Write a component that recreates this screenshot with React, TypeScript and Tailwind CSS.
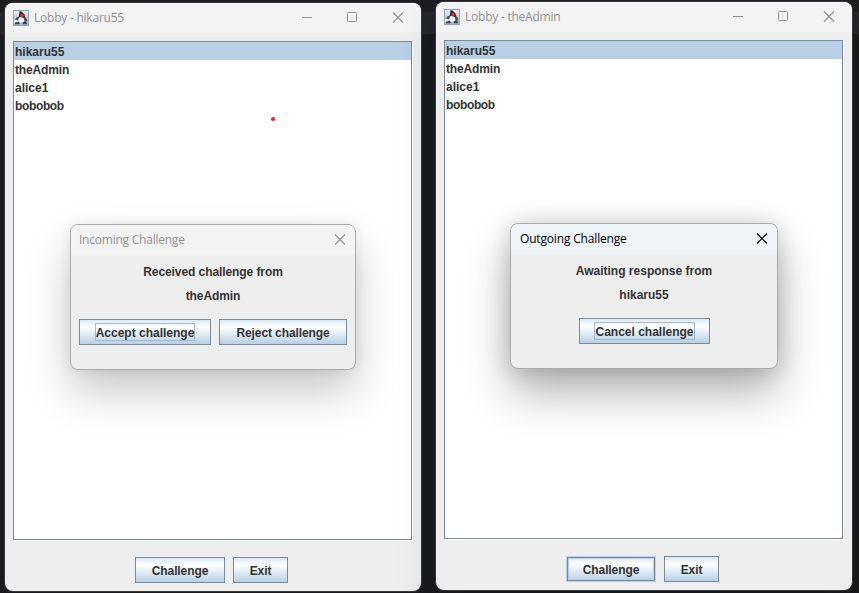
import React from "react";

const uiFont = "font-['Open_Sans','Noto_Sans',sans-serif]";
const titleText = "whitespace-nowrap text-[12px] leading-4";
const swingFont = "font-['Liberation_Sans',Arial,sans-serif] font-bold text-[12px] leading-[18px] text-[#333333]";

function DukeIcon() {
  return (
    <svg width="16" height="16" viewBox="0 0 16 16" className="shrink-0">
      <defs>
        <linearGradient id="duke-sky" x1="0" y1="0" x2="0" y2="1">
          <stop offset="0" stopColor="#e6eff6" />
          <stop offset="1" stopColor="#9fb4c9" />
        </linearGradient>
      </defs>
      <rect x="0.5" y="0.5" width="15" height="15" fill="url(#duke-sky)" stroke="#8ea3b8" />
      <path d="M6.5 1.2 L8.5 1.6 L11.5 4.5 L12.5 8 L10 8.5 L6 8 L6 5 Z" fill="#2a2c31" />
      <path d="M6 6.5 L3.5 7.2 L2 9.5 L4.5 10.5 L6.5 9 Z" fill="#4a4d53" />
      <path d="M11 7.5 L13.5 8 L14.3 11 L12.5 12 L10.5 10 Z" fill="#4a4d53" />
      <path d="M6 7.5 L8 7 L10.5 8 L11.3 10.5 L10.5 12.5 L7 12.5 L5 11 Z" fill="#ffffff" />
      <path d="M1 10.5 L3.5 9.8 L5 11 L4.5 12.5 L1 13 Z" fill="#eef2f5" />
      <path d="M2 12.8 L5.5 11.8 L7 13.2 L6 14.2 L2 14.2 Z" fill="#3d4046" />
      <path d="M9.5 12.6 L11.5 11.5 L14.2 12.8 L13.8 14.2 L10 14.2 Z" fill="#3d4046" />
      <circle cx="9" cy="5.6" r="1.8" fill="#ee2229" />
    </svg>
  );
}

function CloseGlyph() {
  return (
    <svg width="12" height="12" viewBox="0 0 12 12" fill="none" stroke="currentColor" strokeWidth="1.1">
      <path d="M1 0.5 L11 10.5 M11 0.5 L1 10.5" />
    </svg>
  );
}

type ButtonProps = { label: string; width: string; focused?: boolean; isDefault?: boolean };

function MetalButton({ label, width, focused, isDefault }: ButtonProps) {
  return (
    <button
      className={`relative flex h-[26px] shrink-0 items-center justify-center border bg-linear-to-b from-[#dde8f3] via-white via-30% to-[#b8cfe5] ${width} ${swingFont} ${
        isDefault ? "border-[#b8cfe5]" : "border-[#7a8a99]"
      }`}
    >
      {isDefault && <span className="absolute inset-0 border border-[#7a8a99] shadow-[inset_0_0_0_1px_#b8cfe5]" />}
      <span
        className={`relative whitespace-nowrap ${
          focused ? "h-[18px] border border-[#a3b8cc] leading-[18px]" : "top-px tracking-[-0.1px]"
        }`}
      >
        {label}
      </span>
    </button>
  );
}

const players = [
  { name: "hikaru55", tracking: "" },
  { name: "theAdmin", tracking: "tracking-[-0.15px]" },
  { name: "alice1", tracking: "" },
  { name: "bobobob", tracking: "tracking-[-0.36px]" },
];

function Lobby({ name, offset, children }: { name: string; offset: string; children: React.ReactNode }) {
  return (
    <section className={`relative flex h-[588px] w-[416px] shrink-0 flex-col rounded-lg bg-[#eeeeee] ${offset}`}>
      <header className={`flex h-[30px] shrink-0 items-center rounded-t-lg bg-[#f3f3f3] pl-2 text-[#919191] ${uiFont}`}>
        <DukeIcon />
        <span className={`ml-[5px] tracking-[-0.23px] ${titleText}`}>Lobby - {name}</span>
        <svg width="103" height="12" viewBox="0 0 103 12" fill="none" stroke="currentColor" className="mr-[17px] ml-auto">
          <path d="M1 5.5 H11" />
          <rect x="46.5" y="0.5" width="9" height="9" rx="1" />
          <path d="M92 0.5 L102 10.5 M102 0.5 L92 10.5" strokeWidth="1.1" />
        </svg>
      </header>
      <ul
        className={`mx-2 mt-2 h-[499px] w-[399px] shrink-0 border border-[#7a8a99] bg-white shadow-[1px_1px_0_#ffffff] ${swingFont}`}
      >
        {players.map((p, i) => (
          <li key={p.name} className={`h-[18px] pl-px ${i === 0 ? "bg-[#b8cfe5]" : ""}`}>
            <span className={`relative top-px ${p.tracking}`}>{p.name}</span>
          </li>
        ))}
      </ul>
      <footer className="mt-[17px] ml-[130px] flex gap-2">
        <MetalButton label="Challenge" width="w-[90px]" isDefault={name === "theAdmin"} />
        <MetalButton label="Exit" width="w-[55px]" />
      </footer>
      {children}
    </section>
  );
}

type DialogProps = {
  title: string;
  message: string;
  player: string;
  active?: boolean;
  width: string;
  shadow: string;
  children: React.ReactNode;
};

function Dialog({ title, message, player, active, width, shadow, children }: DialogProps) {
  return (
    <div
      className={`absolute top-[221px] flex h-[146px] flex-col overflow-hidden rounded-lg border border-[#ababab] bg-[#eeeeee] ${width} ${shadow}`}
    >
      <div
        className={`flex h-[30px] shrink-0 items-center justify-between pr-[9px] ${uiFont} ${
          active ? "bg-[#eff4f9] pl-[9px] tracking-[-0.17px] text-black" : "bg-[#f3f3f3] pl-2 tracking-[-0.23px] text-[#919191]"
        }`}
      >
        <span className={titleText}>{title}</span>
        <CloseGlyph />
      </div>
      <div className={`mt-2 flex flex-col items-center gap-1.5 ${active ? "" : "tracking-[-0.08px]"} ${swingFont}`}>
        <span>{message}</span>
        <span>{player}</span>
      </div>
      <div className="mt-[14px] flex justify-center gap-2">{children}</div>
    </div>
  );
}

export default function App() {
  return (
    <main className="flex h-[593px] w-[859px] gap-[15px] overflow-hidden bg-[linear-gradient(#1c1d20_0_12px,#25262b_12px_34px,#1a1b1e_34px)] pl-[5px]">
      <Lobby name="hikaru55" offset="mt-[3px] shadow-[0_0_0_1px_#38383b]">
        <span className="absolute top-[114px] left-[266px] size-1 rounded-full bg-[#ed1c24]" />
        <Dialog
          title="Incoming Challenge"
          message="Received challenge from"
          player="theAdmin"
          width="left-[65px] w-[286px]"
          shadow="shadow-[0_22px_44px_rgba(0,0,0,0.22),0_0_12px_rgba(0,0,0,0.08)]"
        >
          <MetalButton label="Accept challenge" width="w-[132px]" focused />
          <MetalButton label="Reject challenge" width="w-[128px]" />
        </Dialog>
      </Lobby>
      <Lobby name="theAdmin" offset="mt-[2px] shadow-[0_0_0_1px_#38383b,0_24px_40px_rgba(0,0,0,0.15)]">
        <Dialog
          title="Outgoing Challenge"
          message="Awaiting response from"
          player="hikaru55"
          active
          width="left-[74px] w-[268px]"
          shadow="shadow-[0_24px_46px_rgba(0,0,0,0.3),0_0_24px_rgba(0,0,0,0.16)]"
        >
          <MetalButton label="Cancel challenge" width="w-[131px] pl-px" focused />
        </Dialog>
      </Lobby>
    </main>
  );
}
